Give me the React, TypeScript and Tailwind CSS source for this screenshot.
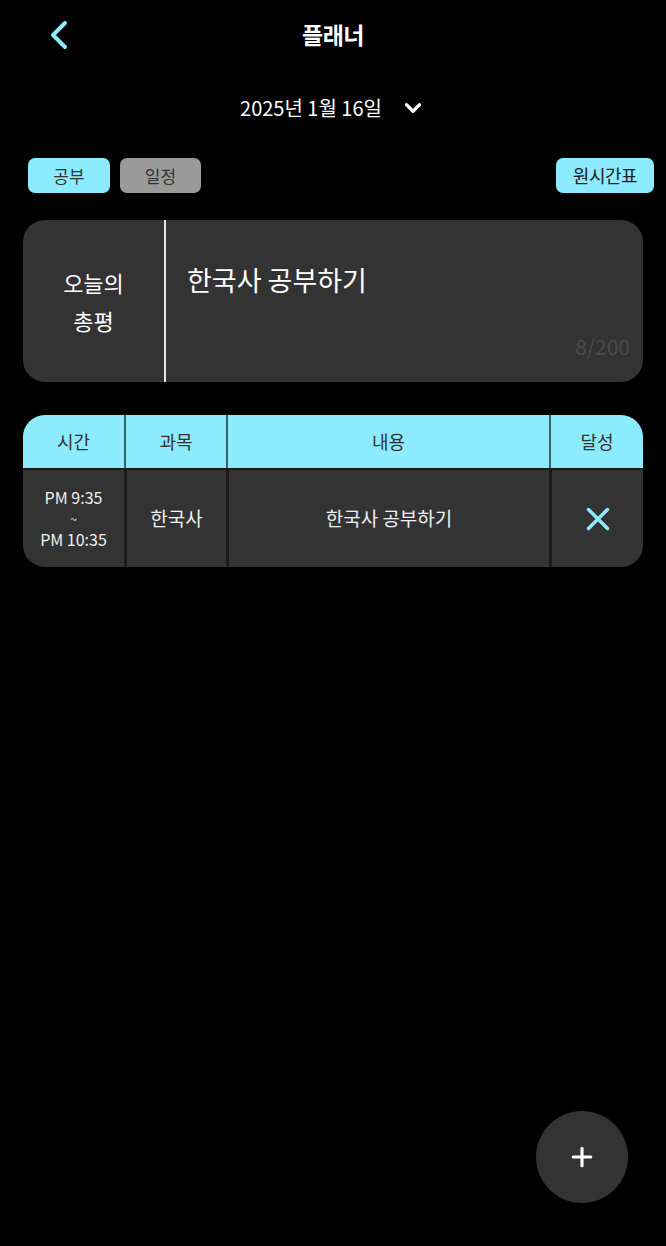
import React from 'react';
import { ChevronLeft, ChevronDown, X, Plus } from 'lucide-react';

const font = { fontFamily: '"Noto Sans CJK KR", "Noto Sans", sans-serif' };

const App: React.FC = () => {
  return (
    <div className="relative w-[666px] h-[1246px] bg-black text-white overflow-hidden" style={font}>
      {/* Top bar */}
      <div className="relative h-[68px] flex items-center justify-center">
        <button className="absolute left-[35px] top-[11px] text-[#8DEBFE]">
          <ChevronLeft size={48} strokeWidth={2} />
        </button>
        <h1 className="text-[23px] font-bold tracking-tight">플래너</h1>
      </div>

      {/* Date */}
      <div className="flex items-center justify-center gap-[18px] mt-[25px]">
        <span className="text-[20px]">2025년 1월 16일</span>
        <ChevronDown size={26} strokeWidth={3} />
      </div>

      {/* Tabs */}
      <div className="flex justify-between items-center pl-[28px] pr-[12px] mt-[35px]">
        <div className="flex gap-[10px]">
          <button className="w-[82px] h-[35px] rounded-[7px] bg-[#8DEBFE] text-[#333] text-[17px]">공부</button>
          <button className="w-[81px] h-[35px] rounded-[7px] bg-[#9a9a9a] text-[#333] text-[17px]">일정</button>
        </div>
        <button className="w-[98px] h-[35px] rounded-[7px] bg-[#8DEBFE] text-[#222] text-[18px] tracking-tight">원시간표</button>
      </div>

      {/* Review card */}
      <div className="mx-[23px] mt-[27px] h-[162px] rounded-[22px] bg-[#333333] flex">
        <div className="w-[141px] flex items-center justify-center text-center text-[22px] leading-[38px]">
          오늘의<br />총평
        </div>
        <div className="w-[2px] bg-[#e5e5e5]" />
        <div className="flex-1 relative pl-[21px] pt-[40px]">
          <p className="text-[27px] leading-[40px]">한국사 공부하기</p>
          <span className="absolute right-[13px] bottom-[20px] text-[21px] text-[#4a4a4a]">8/200</span>
        </div>
      </div>

      {/* Table */}
      <div className="mx-[23px] mt-[33px] rounded-[22px] overflow-hidden bg-[#1a1a1a]">
        <div className="flex h-[53px] bg-[#8DEBFE] text-[#333] text-[18px]">
          <div className="w-[101px] flex items-center justify-center">시간</div>
          <div className="w-[2px] bg-[#35636a]" />
          <div className="w-[100px] flex items-center justify-center">과목</div>
          <div className="w-[2px] bg-[#35636a]" />
          <div className="w-[321px] flex items-center justify-center">내용</div>
          <div className="w-[2px] bg-[#35636a]" />
          <div className="flex-1 flex items-center justify-center">달성</div>
        </div>
        <div className="h-[2px] bg-[#1a1a1a]" />
        <div className="flex h-[97px] bg-[#333333] text-[#f0f0f0]">
          <div className="w-[101px] flex flex-col items-center justify-center text-[16px] leading-[21px]">
            <span>PM 9:35</span>
            <span className="text-[12px]">~</span>
            <span>PM 10:35</span>
          </div>
          <div className="w-[3px] bg-[#1a1a1a]" />
          <div className="w-[99px] flex items-center justify-center text-[19px]">한국사</div>
          <div className="w-[3px] bg-[#1a1a1a]" />
          <div className="w-[320px] flex items-center justify-center text-[19px]">한국사 공부하기</div>
          <div className="w-[3px] bg-[#1a1a1a]" />
          <div className="flex-1 flex items-center justify-center text-[#8DEBFE]">
            <X size={38} strokeWidth={2.2} />
          </div>
        </div>
      </div>

      {/* Floating add button */}
      <button className="absolute left-[536px] top-[1111px] w-[92px] h-[92px] rounded-full bg-[#333333] flex items-center justify-center">
        <Plus size={30} strokeWidth={2.5} />
      </button>
    </div>
  );
};

export default App;
